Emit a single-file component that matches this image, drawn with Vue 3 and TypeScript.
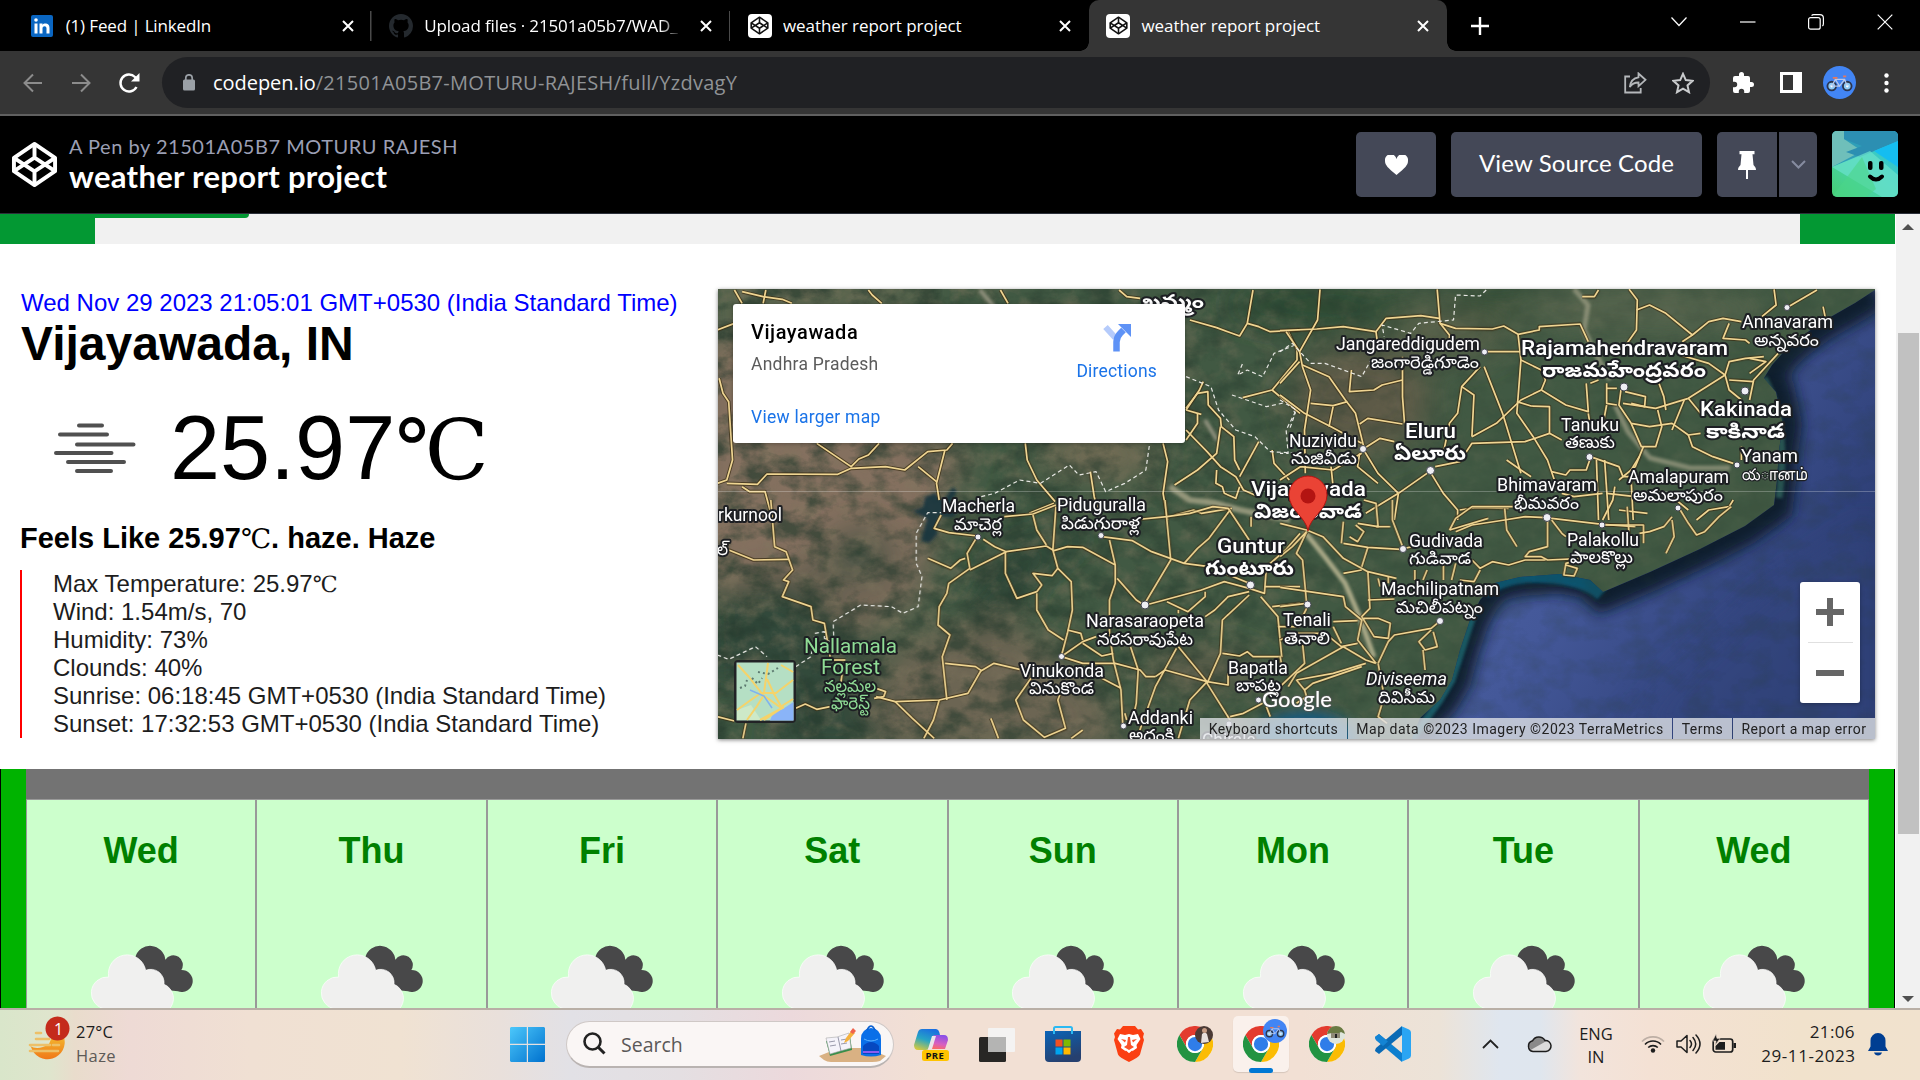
<script setup lang="ts">
interface Tab { title: string; icon: 'linkedin' | 'github' | 'codepen'; active?: boolean }
interface Label { t: string; x: number; w: number; y: number; s: number; k?: string }

const tabs: Tab[] = [
  { title: '(1) Feed | LinkedIn', icon: 'linkedin' },
  { title: 'Upload files · 21501a05b7/WAD_', icon: 'github' },
  { title: 'weather report project', icon: 'codepen' },
  { title: 'weather report project', icon: 'codepen', active: true },
]

const details: string[] = [
  'Wind: 1.54m/s, 70',
  'Humidity: 73%',
  'Clounds: 40%',
  'Sunrise: 06:18:45 GMT+0530 (India Standard Time)',
  'Sunset: 17:32:53 GMT+0530 (India Standard Time)',
]

const days: string[] = ['Wed', 'Thu', 'Fri', 'Sat', 'Sun', 'Mon', 'Tue', 'Wed']

const labels: Label[] = [
  { t: 'ఖమ్మం', x: 1142, w: 62, y: 308, s: 19, k: 'big te' },
  { t: 'Jangareddigudem', x: 1336, w: 144, y: 350, s: 17.5 },
  { t: 'జంగారెడ్డిగూడెం', x: 1371, w: 108, y: 368, s: 17 },
  { t: 'Rajamahendravaram', x: 1521, w: 207, y: 355, s: 21, k: 'big' },
  { t: 'రాజమహేంద్రవరం', x: 1542, w: 164, y: 377, s: 20, k: 'big te' },
  { t: 'Annavaram', x: 1742, w: 91, y: 328, s: 17.5 },
  { t: 'అన్నవరం', x: 1754, w: 65, y: 346, s: 17 },
  { t: 'Kakinada', x: 1700, w: 92, y: 416, s: 21, k: 'big' },
  { t: 'కాకినాడ', x: 1706, w: 79, y: 438, s: 20, k: 'big te' },
  { t: 'Tanuku', x: 1561, w: 58, y: 431, s: 17.5 },
  { t: 'తణుకు', x: 1565, w: 50, y: 448, s: 17 },
  { t: 'Nuzividu', x: 1289, w: 68, y: 447, s: 17.5 },
  { t: 'నుజివీడు', x: 1291, w: 66, y: 464, s: 17 },
  { t: 'Eluru', x: 1405, w: 51, y: 438, s: 21, k: 'big' },
  { t: 'ఏలూరు', x: 1394, w: 72, y: 460, s: 20, k: 'big te' },
  { t: 'యானம்', x: 1742, w: 66, y: 480, s: 16, k: 'ta' },
  { t: 'Yanam', x: 1741, w: 57, y: 462, s: 17.5 },
  { t: 'Bhimavaram', x: 1497, w: 100, y: 491, s: 17.5 },
  { t: 'భీమవరం', x: 1514, w: 65, y: 509, s: 17 },
  { t: 'Amalapuram', x: 1628, w: 101, y: 483, s: 17.5 },
  { t: 'అమలాపురం', x: 1633, w: 90, y: 501, s: 17 },
  { t: 'Vijayawada', x: 1251, w: 115, y: 496, s: 21, k: 'big' },
  { t: 'విజయవాడ', x: 1254, w: 108, y: 518, s: 20, k: 'big te' },
  { t: 'Macherla', x: 942, w: 73, y: 512, s: 17.5 },
  { t: 'మాచెర్ల', x: 954, w: 48, y: 530, s: 17 },
  { t: 'Piduguralla', x: 1057, w: 89, y: 511, s: 17.5 },
  { t: 'పిడుగురాళ్ల', x: 1061, w: 79, y: 529, s: 17 },
  { t: 'rkurnool', x: 718, w: 64, y: 521, s: 17.5 },
  { t: 'ల్', x: 717, w: 11, y: 555, s: 17 },
  { t: 'Guntur', x: 1217, w: 68, y: 553, s: 21, k: 'big' },
  { t: 'గుంటూరు', x: 1205, w: 89, y: 575, s: 20, k: 'big te' },
  { t: 'Narasaraopeta', x: 1086, w: 118, y: 627, s: 17.5 },
  { t: 'నరసరావుపేట', x: 1097, w: 96, y: 645, s: 17 },
  { t: 'Nallamala', x: 804, w: 93, y: 653, s: 20, k: 'park' },
  { t: 'Forest', x: 821, w: 59, y: 674, s: 20, k: 'park' },
  { t: 'నల్లమల', x: 824, w: 52, y: 692, s: 17, k: 'park' },
  { t: 'ఫారెస్ట్', x: 831, w: 39, y: 709, s: 17, k: 'park' },
  { t: 'Vinukonda', x: 1020, w: 84, y: 677, s: 17.5 },
  { t: 'వినుకొండ', x: 1029, w: 65, y: 694, s: 17 },
  { t: 'Bapatla', x: 1228, w: 60, y: 674, s: 17.5 },
  { t: 'బాపట్ల', x: 1236, w: 45, y: 691, s: 17 },
  { t: 'Addanki', x: 1128, w: 65, y: 724, s: 17.5 },
  { t: 'అద్దంకి', x: 1129, w: 45, y: 741, s: 17 },
  { t: 'Chirala', x: 1202, w: 54, y: 746, s: 17.5 },
  { t: 'Tenali', x: 1283, w: 48, y: 626, s: 17.5 },
  { t: 'తెనాలి', x: 1284, w: 46, y: 644, s: 17 },
  { t: 'Gudivada', x: 1409, w: 74, y: 547, s: 17.5 },
  { t: 'గుడివాడ', x: 1409, w: 62, y: 564, s: 17 },
  { t: 'Machilipatnam', x: 1381, w: 118, y: 595, s: 17.5 },
  { t: 'మచిలీపట్నం', x: 1396, w: 87, y: 613, s: 17 },
  { t: 'Palakollu', x: 1567, w: 72, y: 546, s: 17.5 },
  { t: 'పాలకొల్లు', x: 1570, w: 63, y: 563, s: 17 },
  { t: 'Diviseema', x: 1366, w: 81, y: 685, s: 17.5, k: 'ital' },
  { t: 'దివిసీమ', x: 1378, w: 57, y: 703, s: 17 },
]

const towns: [number, number, number][] = [
  [1484.5, 352, 3], [1624, 387, 4], [1787, 307.5, 3], [1745, 391, 4], [1589.5, 457, 3.5], [1363, 449, 3.5],
  [1430.5, 470.5, 4], [1737, 465, 3], [1547, 517.5, 4], [1602, 525, 3], [1678, 508, 3], [978, 537, 3],
  [1101, 535.5, 3], [1250.5, 585, 4], [1145, 605, 4], [1061.5, 656.5, 3], [1258.5, 700, 3], [1123.5, 726, 3],
  [1307.5, 604.5, 3.5], [1403, 549, 3.5], [1440, 621, 3.5], [1229, 724, 3],
]

// Each tile keeps its roads in its own local grid.
const tiles = [
  {
    m: 'translate(700 280) scale(.3827 .33333)',
    roads: ['90,30 110,70', '110,35 165,50 215,58 240,70', '172,30 165,70', '45,150 90,130', '440,30 450,45 475,70', '785,30 805,70', '1095,30 1115,50 1150,55', '1445,30 1430,130 1410,168 1350,143 1280,120', '1430,130 1460,140 1490,155 1568,150', '50,295 60,340 75,365 85,540 70,600 45,610', '70,610 150,613 175,582 360,583 395,565 485,560 535,570 595,515 645,510 660,490', '305,490 395,560 415,537 440,525 468,490', '640,510 618,610 625,660', '570,560 618,605', '850,490 855,540 880,600 928,665', '1020,575 1030,650 1040,690', '1210,490 1222,545 1210,640 1222,720', '1270,390 1305,330 1315,305', '1270,385 1300,340 1327,335 1328,375 1360,415 1362,440 1395,470 1397,540 1410,570', '1270,450 1325,515 1360,560 1400,590 1420,630 1460,650', '1360,440 1350,520 1300,570 1240,615', '1460,485 1410,590', '1418,353 1495,330 1560,240 1560,210 1535,150', '1495,330 1568,400', '1495,510 1500,550 1540,600', '1350,570 1348,610 1365,620 1370,640 1400,655 1410,620', '1240,705 1290,690 1310,700 1390,685', '110,620 130,635 170,635 190,720', '1300,400 1300,430 1270,480', '1270,390 1310,403', '860,700 925,670'],
    borders: ['735,650 770,640 835,600 890,610 965,555 990,585 1035,575 1060,635 1110,610 1165,570 1175,490', '1270,290 1335,320 1355,390 1400,450 1450,470 1490,515 1568,520', '1555,195 1500,220 1470,290 1430,270 1405,285 1420,245', '1390,345 1480,380 1540,365 1555,400 1540,450'],
  },
  {
    m: 'translate(1280 280) scale(.40833 .33333)',
    roads: ['98,28 92,120 48,215 55,260 75,330 60,450 62,580', '0,152 90,147 155,140 235,155 260,115 345,107 390,115', '385,28 392,130 430,145 520,147 548,138 583,163 635,150 635,140 735,132 755,185', '583,163 590,240 580,400 620,470 655,540 672,600', '235,155 240,200', '392,130 415,165 415,190', '15,155 48,215', '48,245 0,310', '55,255 120,290 160,360 185,400 205,500', '75,370 130,377 165,365', '175,270 170,335 230,330 250,315 300,300', '300,230 300,350 305,430', '195,432 215,415 300,432', '200,510 245,475 280,485', '0,345 60,400 125,440 200,490', '500,215 590,215', '490,260 445,320 435,400 415,430 400,520', '500,260 545,400 590,580', '445,320 475,345 470,470', '380,560 440,545 470,490 600,485 660,460 690,480', '470,470 530,430 590,360 640,330', '590,240 640,270 650,300 640,330', '580,365 615,378 660,380 660,460', '640,330 700,375 755,395 750,310', '760,310 780,300', '780,30 770,50 740,50', '855,28 875,60 873,150 850,190', '873,90 905,75 945,100 1010,165 1050,125 1085,115 1130,125', '1010,165 985,185', '1210,28 1215,75 1180,110', '1315,30 1245,80', '1330,80 1335,110', '1100,130 1085,175 1140,180 1150,190', '980,225 1050,250 1090,285 1100,330 1130,360', '1090,285 1000,355 920,385 840,370', '1185,230 1140,235 1100,245 1090,285', '1220,220 1160,300 1150,360', '1100,300 1160,305', '1150,280 1190,245 1150,235', '1000,355 1030,400', '925,300 940,350 945,390', '845,335 895,350 893,380 860,370', '835,330 830,375 860,430 905,440 960,430 1000,465 1030,460', '860,430 885,500 920,500 935,440 925,390', '990,360 960,450', '1000,465 1010,500 1060,530 1110,550', '1130,500 1130,540', '755,400 760,440', '760,535 750,570 710,570 700,585 665,575', '760,530 830,560 840,590 860,590', '800,310 800,370 825,375', '800,325 825,325', '800,375 790,440', '775,540 780,720', '795,540 805,720', '820,620 815,660 790,720', '690,640 720,650 790,640', '290,640 325,610 360,580', '370,580 400,640 435,690 435,720', '290,640 280,720', '205,510 240,580 290,640', '195,520 190,560 240,610', '0,600 50,560 130,570 200,520', '125,560 130,620', '290,640 210,700', '440,690 480,683 560,685', '555,540 590,570 615,590', '860,600 865,720', '830,690 900,700', '800,640 870,650', '1110,660 1100,680 1050,690 1020,720', '890,500 870,560 830,600', '880,530 860,570', '960,650 1000,690', '130,380 120,440'],
    borders: ['0,215 30,190 75,250 110,250 200,290 225,235', '505,30 490,48 430,45 425,120 340,130 320,160 250,135 255,170', '0,360 40,390 15,450 20,520 0,520'],
  },
  {
    m: 'translate(700 500) scale(.3827 .33333)',
    roads: ['185,0 195,140 225,155 242,210 218,240 232,245 215,290 290,320 295,360 325,370 340,470', '75,150 140,180 230,178', '630,45 612,85 650,98 725,108', '720,118 698,160 705,205 650,250 645,280 625,320 622,375 653,405 633,470 645,600', '595,175 655,205 680,180 693,175', '705,210 740,190 800,155 770,140 740,118', '800,155 905,138 925,152 960,140 1000,142 1085,195 1085,250 1070,300 1070,400 1080,480 1100,570 1105,680', '798,155 798,220 828,295 880,275 893,255 870,220 920,227 935,205', '870,45 880,90 905,135', '795,50 870,42 930,15', '930,20 922,150 935,205 970,245 973,330 960,400 945,465', '880,280 880,330 910,390 950,420', '960,390 995,400 1000,420', '950,465 1000,425 1035,410', '1000,430 1050,468 1080,460', '945,470 1000,490 1085,490 1150,510 1165,530 1190,530', '1090,235 1140,300 1160,315 1230,180 1215,0', '1050,110 1130,122 1180,155 1265,190 1330,200 1435,250', '1130,60 1220,50 1280,40 1340,20 1380,25 1435,120', '1385,30 1330,115 1300,145 1265,190', '1165,315 1310,270 1370,245 1435,265 1475,280 1480,200 1530,150 1568,100', '1220,305 1275,335 1320,290 1320,275', '1320,350 1345,330 1380,290 1435,275', '1435,285 1365,360 1360,460 1325,550 1385,660', '1465,290 1510,350 1520,470 1445,470 1430,455 1410,468 1365,460', '1250,440 1325,545 1280,600 1250,715', '1245,445 1190,560 1140,720', '1190,530 1215,510 1325,545 1380,555 1380,520', '1125,440 1145,510 1140,610 1130,660', '1050,535 1100,565', '865,535 825,600 845,660 900,712 955,685 935,600 940,585', '640,490 720,500 735,512 768,490 835,508', '735,510 700,580 625,600 510,605 460,590', '510,605 555,655 612,715', '625,600 610,660 585,715', '455,595 480,590 485,575 460,565', '250,625 275,612 305,628 340,620', '45,650 90,663', '120,670 112,715', '760,655 780,715', '1480,620 1490,650', '1510,380 1568,380', '1475,260 1568,260', '1495,320 1568,310', '1385,650 1420,640 1470,610', '1440,80 1440,50', '1070,120 1085,195', '372,515 368,550', '330,480 380,480', '970,715 1000,690', '1110,640 1115,660', '1250,330 1250,340'],
    borders: ['45,465 75,478 145,440 175,470', '250,500 290,470 300,400 325,395 325,415 350,430 348,365 420,315 500,320 530,340 570,320 580,230 565,190 565,100 595,38 630,38'],
  },
  {
    m: 'translate(1280 500) scale(.40833 .33333)',
    roads: ['0,70 65,90 105,110 155,175 215,215 285,235', '65,95 40,160 55,180 65,310', '65,95 30,140 0,170', '150,130 155,65', '185,75 205,95 190,125 170,110', '155,130 215,142 295,148 340,135', '215,142 200,200', '205,0 235,10 240,80 190,70', '235,80 270,80', '275,0 275,60 300,140', '415,90 430,55 470,20 520,20 600,20', '430,95 470,75 550,60 600,50 650,53 790,73 870,80', '415,90 510,55', '550,25 555,90 580,140', '665,60 690,100 700,110', '655,55 655,140 610,155 600,170 640,170 655,180 745,175 700,190 695,225 720,228 728,205 700,195', '960,60 965,110 945,160', '980,30 1000,70 1020,105 1040,95 1075,50 1105,20', '790,75 890,75 890,130', '850,20 855,110', '880,100 905,95 940,80 960,50', '330,210 330,240', '360,210 350,240', '400,190 400,240', '430,190 420,240', '490,210 475,245 440,240', '470,180 490,205 520,185 560,195 600,180 650,180', '0,262 155,290 160,320 200,360 190,420 235,490', '0,320 65,310', '215,215 220,325 200,350 230,410 265,415 270,370 240,355 205,355', '240,235 245,260', '265,230 265,250', '0,420 40,400 110,400 150,440 190,430', '130,365 190,362', '65,325 55,350', '55,430 60,490 0,560', '390,365 370,385 280,405 265,425 240,490', '370,390 340,425 355,450 385,440 375,395', '350,450 355,510', '240,490 255,590 240,650 262,670', '20,560 40,520 155,440 210,480 235,490', '40,540 60,570 80,550 200,500', '40,540 130,520 210,490', '215,300 280,297', '60,570 65,590 40,610', '155,220 200,210', '0,470 5,500', '150,430 130,380'],
    borders: [],
  },
]

const coast = 'M1875 290 1855 303 1820 323 1790 345 1772 365 1764 378 1776 392 1783 425 1779 450 1777 480 1774 505 1745 526 1700 549 1650 572 1603 592 1590 580 1560 574 1520 577 1495 583 1480 600 1470 620 1460 650 1452 680 1440 700 1420 718 1412 739'

const roadD = (p: string): string => 'M' + p.replace(/ /g, 'L')

const chromes = ['portrait', 'bike', 'house'] as const
</script>

<template>
  <div class="screen">
    <svg class="defs" width="0" height="0">
      <defs>
        <symbol id="pen" viewBox="0 0 24 24">
          <g fill="none" stroke="currentColor" stroke-width="2" stroke-linejoin="round">
            <path d="M12 1.5 22.5 8.6v6.8L12 22.5 1.5 15.4V8.6z" />
            <path d="M12 1.5v7M12 15.5v7M1.5 8.6 12 15.5 22.5 8.6M1.5 15.4 12 8.5l10.500 6.900" />
          </g>
        </symbol>
        <symbol id="cloud" viewBox="0 0 312 190">
          <path fill="#484849" d="M136 36a46 46 0 0 1 90 8 28 28 0 0 1 48 31 33 33 0 1 1-10 64L180 130z" />
          <path fill="#f0f0ef" stroke="#fff" stroke-width="2" d="M48 192a48 48 0 0 1 8-96 55 55 0 0 1 111-20 40 40 0 0 1 55 42 46 46 0 0 1 14 76z" />
        </symbol>
        <symbol id="chrome" viewBox="0 0 48 48">
          <circle cx="24" cy="24" r="24" fill="#fff" />
          <path fill="#e33b2e" d="M3.200 12A24 24 0 0 1 44.800 12H24a12 12 0 0 0-10.400 18z" />
          <path fill="#fbbc04" d="M44.800 12A24 24 0 0 1 24 48l10.400-18A12 12 0 0 0 24 12z" />
          <path fill="#229342" d="M3.200 12A24 24 0 0 0 24 48l10.400-18a12 12 0 0 1-20.800 0z" />
          <circle cx="24" cy="24" r="12" fill="#fff" />
          <circle cx="24" cy="24" r="9.500" fill="#2f7de9" />
        </symbol>
        <symbol id="bike" viewBox="0 0 32 32">
          <circle cx="16" cy="16" r="16" fill="#4285f4" />
          <g fill="#8ec9f5" stroke="#2b3550" stroke-width="1.800"><circle cx="8.500" cy="19.500" r="4.200" /><circle cx="23.500" cy="19.500" r="4.200" /></g>
          <g fill="#fff"><circle cx="8.500" cy="19.500" r="1.300" /><circle cx="23.500" cy="19.500" r="1.300" /></g>
          <path d="M8.500 19.500 12 13h9l2.500 6.500M12 13l4 6.500 5-6.500M16 19.500h-7" fill="none" stroke="#b9c8ea" stroke-width="1.200" />
          <path d="M9.500 11.500h4.500M19.500 10h3" stroke="#e8795b" stroke-width="1.800" />
        </symbol>
      </defs>
    </svg>

    <header class="tabstrip">
      <div v-for="(tab, i) in tabs" :key="i" class="tab" :class="{ active: tab.active, ruled: i < 2 }">
        <span class="fav">
          <svg v-if="tab.icon === 'linkedin'" width="22" height="22" viewBox="0 0 22 22">
            <rect width="22" height="22" rx="2" fill="#0a66c2" />
            <path fill="#fff" d="M3.500 8.500h3v10h-3zM8.500 8.500h3v1.400c1-1.800 7-2.400 7 3v5.600h-3v-5.200c0-3-4-2.600-4 0v5.200h-3z" /><circle cx="5" cy="5" r="1.800" fill="#fff" />
          </svg>
          <svg v-else-if="tab.icon === 'github'" width="24" height="24" viewBox="0 0 16 16">
            <path fill="#24292e" d="M8 0C3.580 0 0 3.580 0 8c0 3.540 2.290 6.530 5.470 7.590.4.070.55-.17.55-.38 0-.19-.01-.82-.01-1.490-2.010.37-2.530-.49-2.690-.94-.09-.23-.48-.94-.82-1.130-.28-.15-.68-.52-.01-.53.63-.01 1.080.58 1.230.82.72 1.210 1.870.87 2.330.66.07-.52.28-.87.51-1.070-1.780-.2-3.640-.89-3.640-3.950 0-.87.31-1.590.82-2.150-.08-.2-.36-1.020.08-2.120 0 0 .67-.21 2.200.82a7.600 7.600 0 0 1 4 0c1.530-1.040 2.200-.82 2.200-.82.44 1.100.16 1.920.08 2.120.51.56.82 1.270.82 2.150 0 3.070-1.870 3.750-3.650 3.950.29.25.54.73.54 1.480 0 1.070-.01 1.930-.01 2.200 0 .21.15.46.55.38A8 8 0 0 0 16 8c0-4.420-3.580-8-8-8z" />
          </svg>
          <span v-else class="penfav"><svg width="19" height="19"><use href="#pen" /></svg></span>
        </span>
        <span class="tabtitle" :class="tab.icon">{{ tab.title }}</span>
        <svg class="x" width="12" height="12" viewBox="0 0 12 12"><path d="M1 1l10 10M11 1L1 11" stroke="#fff" stroke-width="2" /></svg>
      </div>
      <svg class="plus" width="20" height="20" viewBox="0 0 20 20"><path d="M10 1v18M1 10h18" stroke="#fff" stroke-width="2.400" /></svg>
      <div class="winctl">
        <svg width="16" height="16" viewBox="0 0 16 16"><path d="M.5 3.500 8 11.500l7.500-8" /></svg>
        <svg width="16" height="16" viewBox="0 0 16 16"><path d="M0 8h15.500" /></svg>
        <svg width="16" height="16" viewBox="0 0 16 16"><rect x=".6" y="3.600" width="11.600" height="11.600" rx="2" /><path d="M3.600 1.600c.5-.7 1-.9 2-.9h6.200q3.600 0 3.600 3.600v5.500c0 1.300-.3 1.800-1 2.300" /></svg>
        <svg width="16" height="16" viewBox="0 0 16 16"><path d="M.7.7l14.600 14.600M15.300.7.7 15.300" /></svg>
      </div>
    </header>

    <div class="toolbar">
      <svg class="nav" width="20" height="20" viewBox="0 0 20 20"><path d="M19 10H2M10 1.500 1.500 10l8.500 8.500" /></svg>
      <svg class="nav" width="20" height="20" viewBox="0 0 20 20"><path d="M1 10h17M10 1.500l8.500 8.500-8.500 8.500" /></svg>
      <svg class="nav reload" width="22" height="22" viewBox="0 0 22 22"><path d="M18.500 15A8.500 8.500 0 1 1 17 5l2 2.500" /><path d="M21.500 1v8.500H13z" fill="#fff" stroke="none" /></svg>
      <div class="omnibox">
        <svg width="12" height="17" viewBox="0 0 12 17"><rect y="5.500" width="12" height="11" rx="1.500" fill="#9aa0a6" /><path d="M2.800 7V4a3.200 3.200 0 0 1 6.400 0v3" fill="none" stroke="#9aa0a6" stroke-width="1.700" /></svg>
        <span class="url"><b>codepen.io</b>/21501A05B7-MOTURU-RAJESH/full/YzdvagY</span>
        <svg class="share" width="23" height="22" viewBox="0 0 23 22"><path d="M6 4.500H1.200v16h15.500V16" /><path d="M14.500 1.500 21.500 7.800l-7 6.400v-3.700c-4 0-6.500 1-8.700 4.500.6-5.500 3.400-9 8.700-9.700z" /></svg>
        <svg class="star" width="22" height="22" viewBox="0 0 22 22"><path d="M11 1.800l2.800 6.300 6.800.7-5.100 4.600 1.500 6.800-6-3.500-6 3.500 1.500-6.800L1.400 8.800l6.800-.7z" /></svg>
      </div>
      <svg width="24" height="24" viewBox="0 0 24 24"><path fill="#fff" d="M20.500 11H19V7a2 2 0 0 0-2-2h-4V3.500a2.500 2.500 0 0 0-5 0V5H4a2 2 0 0 0-2 2v3.800h1.500a2.700 2.700 0 0 1 0 5.400H2V20a2 2 0 0 0 2 2h3.800v-1.500a2.700 2.700 0 0 1 5.400 0V22H17a2 2 0 0 0 2-2v-4h1.500a2.500 2.500 0 0 0 0-5z" /></svg>
      <span class="panel" />
      <svg class="profile" width="33" height="33"><use href="#bike" /></svg>
      <svg class="dots" width="5" height="20" viewBox="0 0 5 20"><g fill="#fff"><circle cx="2.500" cy="2.500" r="2.200" /><circle cx="2.500" cy="10" r="2.200" /><circle cx="2.500" cy="17.500" r="2.200" /></g></svg>
    </div>

    <div class="penhead">
      <svg class="penlogo" width="47" height="47"><use href="#pen" /></svg>
      <div class="pentitle">
        <p>A Pen by 21501A05B7 MOTURU RAJESH</p>
        <h1>weather report project</h1>
      </div>
      <button class="btn heart"><svg width="23" height="20" viewBox="0 0 23 20"><path fill="#fff" d="M11.500 20C3 13 0 10 0 6a5.800 5.800 0 0 1 11.500-2A5.800 5.800 0 0 1 23 6c0 4-3 7-11.500 14z" /></svg></button>
      <button class="btn source">View Source Code</button>
      <button class="btn pin"><svg width="18" height="28" viewBox="0 0 18 28"><path fill="#fff" d="M1.500 0h15v3.300h-2L15.500 14c1.500 1.500 2.500 3 2.500 5H0c0-2 1-3.500 2.500-5L3.500 3.300h-2zM8 19h2v9H8z" /></svg></button>
      <button class="btn caret"><svg width="15" height="9" viewBox="0 0 15 9"><path d="M1 1l6.500 6.500L14 1" fill="none" stroke="#868ca0" stroke-width="2" /></svg></button>
      <svg class="avatar" width="66" height="66" viewBox="0 0 66 66">
        <defs><linearGradient id="av" x1="0" y1="1" x2="1" y2="0"><stop offset="0" stop-color="#46cf74" /><stop offset=".5" stop-color="#48d4b4" /><stop offset="1" stop-color="#1db4e8" /></linearGradient></defs>
        <rect width="66" height="66" fill="url(#av)" />
        <path d="M0 0h66v10L0 36z" fill="#2f9fb8" /><path d="M0 0h12v8L30 20 0 36z" fill="#6fbfba" /><path d="M12 0h54v10L28 26l-14-5 16-6L12 8z" fill="#2c8fb2" />
        <path d="M66 10v26L42 20z" fill="#15bdf0" /><path d="M38 20 66 44v22H50L0 36z" fill="#68e0cb" opacity=".75" />
        <path d="M0 66 30 26l14 32-10 8z" fill="#4bd588" opacity=".6" />
        <rect x="36" y="30" width="4.500" height="9" rx="2" /><rect x="47" y="30" width="4.500" height="9" rx="2" />
        <path d="M38 45.500q6 6 12 0" fill="none" stroke="#000" stroke-width="4" stroke-linecap="round" />
      </svg>
    </div>

    <main class="viewport">
      <div class="page">
        <div class="band"><i class="g" /><div class="mid"><i class="strip" /></div><i class="g" /></div>
        <section class="now">
          <div class="report">
            <p class="date">Wed Nov 29 2023 21:05:01 GMT+0530 (India Standard Time)</p>
            <h2>Vijayawada, IN</h2>
            <div class="temp">
              <svg width="82" height="50" viewBox="55 422.500 82 50"><path d="M80 425h23M61 434h47M78 444h56.500M57 452.500h55.500M69 461.500h56M78 470.500h34" stroke="#505050" stroke-width="4" stroke-linecap="round" /></svg>
              <span>25.97<em>℃</em></span>
            </div>
            <h3>Feels Like 25.97<em>℃</em>. haze. Haze</h3>
            <div class="details">
              <p>Max Temperature: 25.97<em>℃</em></p>
              <p v-for="d in details" :key="d">{{ d }}</p>
            </div>
          </div>

          <div class="map">
            <svg class="terrain" width="1157" height="450" viewBox="718 289 1157 450">
              <defs>
                <filter id="grain" x="0" y="0" width="100%" height="100%" color-interpolation-filters="sRGB">
                  <feTurbulence type="fractalNoise" baseFrequency=".05 .06" numOctaves="5" seed="8" />
                  <feColorMatrix values="0 0 0 0 .5  0 0 0 0 .46  0 0 0 0 .37  2.400 0 0 0 -1" />
                </filter>
                <filter id="shade" x="0" y="0" width="100%" height="100%" color-interpolation-filters="sRGB">
                  <feTurbulence type="fractalNoise" baseFrequency=".035 .05" numOctaves="5" seed="21" />
                  <feColorMatrix values="0 0 0 0 .15  0 0 0 0 .23  0 0 0 0 .18  0 2.800 0 0 -1.150" />
                </filter>
                <filter id="soft" filterUnits="userSpaceOnUse" x="618" y="189" width="1357" height="650"><feGaussianBlur stdDeviation="16" /></filter>
                <filter id="soft2" filterUnits="userSpaceOnUse" x="618" y="189" width="1357" height="650"><feGaussianBlur stdDeviation="7" /></filter>
                <filter id="soft3" filterUnits="userSpaceOnUse" x="618" y="189" width="1357" height="650"><feGaussianBlur stdDeviation="1.500" /></filter>
                <linearGradient id="sea" x1="0" y1="0" x2="1" y2=".6"><stop offset=".2" stop-color="#4e63a3" /><stop offset=".55" stop-color="#445899" /><stop offset="1" stop-color="#2b3c72" /></linearGradient>
                <linearGradient id="west" x1="0" x2="1" y1="0" y2="0"><stop offset="0" stop-color="#fff" /><stop offset=".42" stop-color="#bbb" /><stop offset=".62" stop-color="#444" /><stop offset="1" stop-color="#333" /></linearGradient>
                <mask id="dry"><rect x="718" y="289" width="1157" height="450" fill="url(#west)" /></mask>
                <clipPath id="coast"><path :d="coast + 'H1875z'" /></clipPath>
              </defs>
              <rect x="718" y="289" width="1157" height="450" fill="#415943" />
              <g filter="url(#soft)">
                <path d="M700 340h130l70 90 70 20-30 60-20 90-60 30-60 0-30-50-90 10z" fill="#84705f" />
                <path d="M718 270h200l20 30-220 40z" fill="#5d6650" />
                <path d="M800 560l60-40 40 20-10 50-60 0z" fill="#52584a" />
                <path d="M900 640l110-20 80 60 40 70H860l10-60z" fill="#6c6553" />
                <ellipse cx="1100" cy="455" rx="60" ry="20" fill="#7a7058" />
                <ellipse cx="1360" cy="400" rx="70" ry="55" fill="#5d5a47" />
                <ellipse cx="1450" cy="330" rx="60" ry="30" fill="#56604a" />
                <path d="M700 610l80-40 90 60-10 50 30 70H770l20-60-90-10z" fill="#33493a" />
                <path d="M960 640l30-70 40-30 60-10-40 30-50 60z" fill="#2c4234" />
                <ellipse cx="1320" cy="305" rx="90" ry="20" fill="#2b4831" />
                <ellipse cx="1500" cy="300" rx="50" ry="14" fill="#2b4831" />
                <ellipse cx="1640" cy="310" rx="130" ry="18" fill="#5a6650" />
                <ellipse cx="1200" cy="670" rx="60" ry="20" fill="#5c5b48" />
              </g>
              <g mask="url(#dry)">
                <rect x="718" y="289" width="1157" height="450" filter="url(#grain)" opacity=".55" />
                <rect x="718" y="289" width="1157" height="450" filter="url(#shade)" opacity=".7" />
              </g>
              <g filter="url(#soft3)" fill="#16343f"><path d="M925 497l10-4 8 8 10-14 4 4-8 16 10 4-6 6-14 0-2 18-8 8-8-2 6-22-14-8 10-4z" opacity=".9" /></g>
              <ellipse cx="1305" cy="740" rx="52" ry="28" fill="#155a86" filter="url(#soft2)" />
              <g clip-path="url(#coast)">
                <rect x="1400" y="289" width="475" height="450" fill="url(#sea)" />
                <path :d="coast" fill="none" stroke="#101a2c" stroke-width="38" filter="url(#soft2)" opacity=".95" />
                <path d="M1484 592q20-18 60-16 40 2 58 18" fill="none" stroke="#08627f" stroke-width="14" filter="url(#soft3)" opacity=".8" />
                <path d="M1764 378q25 45 15 120" fill="none" stroke="#2f625c" stroke-width="7" filter="url(#soft3)" opacity=".8" />
                <path d="M1475 610 1452 680 1440 700 1412 739" fill="none" stroke="#1f6a74" stroke-width="7" filter="url(#soft3)" opacity=".8" />
                <path d="M1620 739l60-70 90-80 105-70v220z" fill="#34477f" opacity=".55" filter="url(#soft)" />
                <rect x="1400" y="289" width="475" height="450" filter="url(#shade)" opacity=".16" />
              </g>
              <g fill="none" filter="url(#soft3)">
                <path d="M1574 289 1588 305 1584 330 1595 352 1610 380M1615 405 1628 432 1650 458 1690 468 1730 468" stroke="#9a9b82" stroke-width="5" opacity=".75" />
                <path d="M1304 531 1325 557 1345 583 1358 613 1374 657" stroke="#b5b18f" stroke-width="5" opacity=".9" />
                <path d="M1170 487 1190 500 1215 503 1240 510 1290 520" stroke="#a8a588" stroke-width="6" opacity=".8" />
                <path d="M980 290l15 18M1205 420l12 20" stroke="#8d8f7b" stroke-width="4" />
              </g>
              <g v-for="(tile, i) in tiles" :key="i" :transform="tile.m" fill="none" stroke-linejoin="round">
                <path v-for="(r, n) in tile.roads" :key="'c' + n" class="casing" :d="roadD(r)" />
                <path v-for="(r, n) in tile.roads" :key="'r' + n" class="road" :d="roadD(r)" />
                <path v-for="(r, n) in tile.borders" :key="'b' + n" class="border" :d="roadD(r)" />
              </g>
              <path d="M718 491.500h1157" stroke="#fff" opacity=".25" />
              <circle v-for="(c, i) in towns" :key="'t' + i" :cx="c[0]" :cy="c[1]" :r="c[2]" fill="#eeeef4" stroke="#444650" />
              <text v-for="(l, i) in labels" :key="'l' + i" :class="l.k" :x="l.x" :y="l.y" :font-size="l.s" :textLength="l.w" lengthAdjust="spacingAndGlyphs">{{ l.t }}</text>
              <text class="glogo" x="1262" y="707" font-size="22" textLength="70">Google</text>
              <path d="M1308 531c-2-14-19-21-19-36a19 19 0 0 1 38 0c0 15-17 22-19 36z" fill="#ea4335" stroke="#b31412" stroke-width="1" /><circle cx="1308" cy="496" r="7.500" fill="#b31412" />
            </svg>

            <div class="card">
              <div class="place"><b>Vijayawada</b><span>Andhra Pradesh</span><a>View larger map</a></div>
              <div class="dir">
                <svg width="28" height="28" viewBox="0 0 28 28"><path d="M2.500 3 12 13.500" stroke="#b5cbfb" stroke-width="6" /><path d="M13.500 27.500V18c0-4 1-6 4-9l3-3" fill="none" stroke="#5e92f6" stroke-width="6.500" /><path d="M15 0h13v13z" fill="#5e92f6" /></svg>
                <a>Directions</a>
              </div>
            </div>
            <svg class="thumb" width="62" height="63" viewBox="0 0 62 63">
              <rect width="62" height="63" rx="4" fill="#222326" /><rect x="2.500" y="2.500" width="57" height="58" fill="#b5dfc4" />
              <path d="M59.500 42v18.500H36q2-9 12-11z" fill="#8ab4f8" /><path d="M3 60V50l14-5 10 15z" fill="#cde9c8" />
              <g fill="none" stroke="#f5d36a" stroke-width="2"><path d="M4 5l11 12 14 18 17 12 13-8M34 3l-4 30M59 20 42 33H27L14 42 3 50M13 60l10-14 7-11M30 60l18-12-8-14-7-15M47 5l12 7M26 60l24-13" /></g>
              <path d="M16 30l14 6 8 12" fill="none" stroke="#7fb2ef" stroke-width="1.500" />
              <path d="M6 28l5-2 2-6M18 18l6 6 4-6M24 12l10 2 10-6" fill="none" stroke="#5d7a70" stroke-width="2" stroke-dasharray="2 3" />
            </svg>
            <div class="zoom">
              <svg width="28" height="28" viewBox="0 0 28 28"><path d="M14 0v28M0 14h28" stroke="#666" stroke-width="6" /></svg>
              <i />
              <svg width="28" height="28" viewBox="0 0 28 28"><path d="M0 14h28" stroke="#666" stroke-width="6" /></svg>
            </div>
            <div class="credits"><span class="c1">Keyboard shortcuts</span><span class="c2">Map data ©2023 Imagery ©2023 TerraMetrics</span><span class="c3">Terms</span><span class="c4">Report a map error</span></div>
          </div>
        </section>

        <section class="forecast">
          <div class="week">
            <div v-for="(d, i) in days" :key="i" class="day"><h4>{{ d }}</h4><svg width="104" height="63.300"><use href="#cloud" width="104" height="63.300" /></svg></div>
          </div>
        </section>
      </div>
      <aside class="scroll"><i class="up" /><i class="bar" /><i class="down" /></aside>
    </main>

    <footer class="taskbar">
      <div class="weather">
        <svg width="42" height="46" viewBox="0 0 42 46">
          <defs><linearGradient id="sun" x1="0" y1="0" x2="0" y2="1"><stop offset="0" stop-color="#f3b52e" /><stop offset="1" stop-color="#f07818" /></linearGradient></defs>
          <path d="M2 30q8 5 19-2l3-7h12a17 17 0 0 1-33 10z" fill="url(#sun)" />
          <path d="M8 17h5M8 23h13M2 29h20M25 29h6M2 35h28" stroke="#edc068" stroke-width="2.600" stroke-linecap="round" />
          <circle cx="29.500" cy="12.500" r="12" fill="#c42b1c" />
        </svg>
        <span class="badge">1</span>
        <div><b>27°C</b><span>Haze</span></div>
      </div>
      <div class="apps">
        <span class="cell"><svg class="win" width="35" height="35" viewBox="0 0 35 35"><defs><linearGradient id="win" x1="0" y1="0" x2="1" y2="1"><stop offset="0" stop-color="#4cc8fb" /><stop offset="1" stop-color="#0071ce" /></linearGradient></defs><path fill="url(#win)" d="M1 0h15.800v16.800H0V1zM18 0h16l1 1v15.800H18zM0 18h16.800v17H1l-1-1zM18 18h17v16l-1 1H18z" /></svg></span>
        <div class="search">
          <svg width="23" height="23" viewBox="0 0 23 23"><circle cx="9.500" cy="9.500" r="8" fill="none" stroke="#222" stroke-width="2.600" /><path d="M15.500 15.500l6 6" stroke="#222" stroke-width="3" /></svg>
          <span>Search</span>
          <svg class="school" width="67" height="38" viewBox="0 0 67 38">
            <path d="M0 31 20 23h28l19 8-6 5q-3 1-8 1H12q-4 0-7-2z" fill="#d9b183" />
            <path d="M7 16l24-5 2 14-22 6z" fill="#388e4a" /><path d="M7 13 18 12l12-4 2 15-11 3-10 3z" fill="#f5f3fa" stroke="#aaa" stroke-width=".6" /><path d="M19 12l3 14M10 17l6-1M11 21l6-1M22 15l6-1M22 19l6-1" stroke="#99a" stroke-width="1" />
            <path d="M25 18l2-5 6-8 3 3-7 8z" fill="#f5b13c" /><path d="M31 7l3-4 3 3-3 3z" fill="#f0624d" />
            <path d="M42 30V14q0-10 10-11 10 1 10 11v16q-10 3-20 0z" fill="#0a6fe8" /><path d="M48 5q4-8 8 0" fill="none" stroke="#0a5fd0" stroke-width="1.600" /><path d="M44 29v-8q8-8 16 0v8z" fill="#0648c0" /><path d="M44 27h16" stroke="#8b5cf0" stroke-width="2" /><path d="M45 14q7 4 14 0" stroke="#60b4ff" fill="none" />
          </svg>
        </div>
        <span class="cell"><svg width="35" height="35" viewBox="0 0 35 35">
          <defs><linearGradient id="cpa" x1=".6" y1="0" x2=".2" y2="1"><stop offset="0" stop-color="#1a6fe0" /><stop offset=".5" stop-color="#27a5c4" /><stop offset="1" stop-color="#d7c93c" /></linearGradient><linearGradient id="cpb" x1=".6" y1="0" x2=".3" y2="1"><stop offset="0" stop-color="#8a4fe8" /><stop offset=".6" stop-color="#d85fc0" /><stop offset="1" stop-color="#ff6b5e" /></linearGradient></defs>
          <path fill="url(#cpa)" d="M8 2h14q3 0 4 6h-6l-5 13q-1 2-3 2H4q-4 0-4-5L4 5q1-3 4-3z" /><path fill="url(#cpb)" d="M20 8h10q4 0 4 5l-3 9H15z" /><path d="M18 9l-4 13 4 0 4-13z" fill="#ece6ea" />
          <rect x="8" y="23" width="27" height="11" rx="2.500" fill="#ffc400" /><text x="11.500" y="32" class="pre">PRE</text></svg></span>
        <span class="cell"><svg width="36" height="35" viewBox="0 0 36 35"><rect y="10" width="27" height="25" rx="1.500" fill="#282725" /><rect x="9" y="1" width="27" height="24" rx="1" fill="#f4f4f4" opacity=".92" /><path d="M9 10h18v15H9z" fill="#b4b4b3" /></svg></span>
        <span class="cell"><svg width="36" height="36" viewBox="0 0 36 36"><defs><linearGradient id="st" x1="0" y1="0" x2=".4" y2="1"><stop offset="0" stop-color="#0a64b8" /><stop offset="1" stop-color="#26406f" /></linearGradient></defs><path d="M0 5h36v27q0 4-4 4H4q-4 0-4-4z" fill="url(#st)" /><path d="M9 8V2.500Q9 1 10.500 1h15q1.500 0 1.500 1.500V8" fill="none" stroke="#2cb9f2" stroke-width="2" /><path fill="#f25022" d="M10.500 13.500h7v7h-7z" /><path fill="#7fba00" d="M18.500 13.500h7v7h-7z" /><path fill="#00a4ef" d="M10.500 21.500h7v7h-7z" /><path fill="#ffb900" d="M18.500 21.500h7v7h-7z" /></svg></span>
        <span class="cell"><svg width="30" height="36" viewBox="0 0 30 36">
          <path fill="#fb3f12" d="M9 0h12l3 3.500 3-.5 3 4.500-1 3.500 1 3-4 14.500Q25 31 15 36 5 31 4 28.500L0 14l1-3-1-3.500L3 3l3 .5z" />
          <path fill="#fff" d="M6 8l5 1 4-1 4 1 5-1 2.500 5-4 6 .5 3-5 3.500L15 28l-3-2.500-5-3.500.5-3-4-6z" /><path fill="#fb3f12" d="M7 13l5 1-1 2.500zM23 13l-5 1 1 2.500zM14 11h2l1 8 3 2-5 3-5-3 3-2z" opacity=".9" /><path d="M11.500 25l3.500 3 3.500-3" fill="none" stroke="#fb3f12" stroke-width="1.200" /></svg></span>
        <span v-for="c in chromes" :key="c" class="cell" :class="{ current: c === 'bike' }">
          <svg class="cr" width="46" height="46" viewBox="0 0 46 46">
            <use href="#chrome" x="5" y="5" width="36" height="36" />
            <use v-if="c === 'bike'" href="#bike" x="25" y="-2" width="24" height="24" />
            <g v-else-if="c === 'portrait'"><circle cx="32" cy="14" r="9" fill="#4b3a35" /><path d="M29 22l1-9q3-3 5 0l2 8z" fill="#e9dfdc" /><circle cx="32.500" cy="9.500" r="2.500" fill="#c99e86" /></g>
            <g v-else><circle cx="32" cy="14" r="9" fill="#dfe6dc" /><path d="M23 13q2-8 9-8t9 8l-4-2-5 3-4-2z" fill="#6a7a42" /><path d="M27 12h9v5h-9z" fill="#8e8a76" /><path d="M31 13h2v4h-2z" fill="#222" /></g>
          </svg>
          <i v-if="c === 'bike'" />
        </span>
        <span class="cell"><svg width="36" height="36" viewBox="0 0 36 36"><path d="M0 11l4-3 23 19v9L1 14q-1-2-1-3z" fill="#0d7fcf" /><path d="M0 25l4 3L27 9V0L1 22q-1 2-1 3z" fill="#0a6ab5" /><path d="M26 0l1 1v34l-1 1 8-3.500q2-1 2-3V6.500q0-2-2-3z" fill="#2aa5f3" /><path d="M0 11l4-3 9 7.500L8 20 1 14q-1-2-1-3z" fill="#1484d4" /></svg></span>
      </div>
      <div class="tray">
        <svg class="chev" width="17" height="10" viewBox="0 0 17 10"><path d="M1 9l7.500-7.500L16 9" fill="none" stroke="#222" stroke-width="1.800" /></svg>
        <svg class="od" width="26" height="18" viewBox="0 0 26 18"><path d="M7 16.500a5.500 5.500 0 0 1-.5-10.700A7.200 7.200 0 0 1 19 5.500 5.500 5.500 0 0 1 20 16.500z" fill="#dcdcdc" /><path d="M6.500 5.800A7.200 7.200 0 0 1 19 5.500l2 .3-16 9q-5-6 1.500-9z" fill="#8a8a8a" /><path d="M7 16.500a5.500 5.500 0 0 1-.5-10.700A7.200 7.200 0 0 1 19 5.500 5.500 5.500 0 0 1 20 16.500z" fill="none" stroke="#1d1d1d" stroke-width="1.500" /></svg>
        <div class="lang"><span>ENG</span><span>IN</span></div>
        <svg class="wifi" width="24" height="18" viewBox="0 0 24 18"><g fill="none" stroke="#1d1d1d" stroke-width="1.600"><path d="M1 6.500a15.500 15.500 0 0 1 22 0" opacity=".25" /><path d="M4 9.500a11 11 0 0 1 16 0M7.200 12.500a7 7 0 0 1 9.600 0" /></g><circle cx="12" cy="15.500" r="2.200" fill="#1d1d1d" /></svg>
        <svg class="vol" width="25" height="20" viewBox="0 0 25 20"><g fill="none" stroke="#1d1d1d" stroke-width="1.500" stroke-linejoin="round"><path d="M1 7h4l6-5.500v17L5 13H1z" /><path d="M14 6.500q3 3.500 0 7M17 3.500q5.500 6.500 0 13M20 1q8 9 0 18" stroke-linecap="round" /></g></svg>
        <svg class="bat" width="24" height="20" viewBox="0 0 24 20"><rect x="1.200" y="5" width="19.500" height="13" rx="2.500" fill="none" stroke="#1d1d1d" stroke-width="1.700" /><path d="M3.500 15.800V12l4-4H13v7.800zM21.500 9h2.500v5h-2.500z" fill="#1d1d1d" /><path d="M4 0 .5 7H4l-1 4.500L8 4.500H5z" fill="#1d1d1d" stroke="#f3e2d5" stroke-width=".6" /></svg>
        <div class="clock"><span>21:06</span><span class="day8">29-11-2023</span></div>
        <svg class="bell" width="20" height="23" viewBox="0 0 20 23"><path fill="#003e92" d="M10 0a7.500 7.500 0 0 1 7.500 7.500v6l2.500 4.500H0l2.500-4.500v-6A7.500 7.500 0 0 1 10 0zM6 19.500h8q-1 3-4 3t-4-3z" /></svg>
      </div>
    </footer>
  </div>
</template>

<style>
body { margin: 0; overflow: hidden; }
</style>

<style scoped>
* { box-sizing: border-box; }
p, h1, h2, h3, h4 { margin: 0; font-weight: 400; }
svg { display: block; flex: none; }
.defs { position: absolute; }
.screen { width: 1920px; height: 1080px; display: flex; flex-direction: column; overflow: hidden; background: #fff; font-family: "Open Sans", "Noto Sans", sans-serif; white-space: nowrap; }

.tabstrip { height: 51px; flex: none; background: #000; display: flex; padding-left: 13px; }
.tab { position: relative; width: 358.600px; flex: none; display: flex; align-items: center; padding-left: 17.500px; color: #fff; }
.tab.ruled { background: linear-gradient(#4a4a4a, #4a4a4a) right 0 top 11px / 1.500px 30px no-repeat; }
.tab.active { background: #353535; border-radius: 10px 10px 0 0; }
.tab.active::before, .tab.active::after { content: ""; position: absolute; bottom: 0; width: 9px; height: 9px; }
.tab.active::before { left: -9px; background: radial-gradient(circle at 0 0, transparent 8.500px, #353535 9px); }
.tab.active::after { right: -9px; background: radial-gradient(circle at 100% 0, transparent 8.500px, #353535 9px); }
.fav { width: 35.200px; flex: none; }
.penfav { display: grid; place-items: center; width: 24px; height: 24px; border-radius: 4px; background: #fff; color: #111; }
.tabtitle { width: 256px; flex: none; overflow: hidden; font-size: 17px; letter-spacing: -.05px; }
.tabtitle.linkedin { letter-spacing: -.15px; }
.tabtitle.github { letter-spacing: -.12px; -webkit-mask: linear-gradient(90deg, #000 236px, transparent 258px); mask: linear-gradient(90deg, #000 236px, transparent 258px); }
.x { margin-left: 20px; }
.plus { margin: 16px 0 0 23px; }
.winctl { margin-left: auto; display: flex; gap: 52.700px; padding: 13.500px 27px 0 0; }
.winctl svg { fill: none; stroke: #fff; stroke-width: 1.200; }

.toolbar { height: 65px; flex: none; background: #353535; border-bottom: 2px solid #606060; display: flex; align-items: center; padding-left: 23px; }
.nav { fill: none; stroke: #8c8c8c; stroke-width: 2; margin-right: 28px; }
.nav.reload { stroke: #fff; stroke-width: 2.400; margin: 0 22px 0 -1px; }
.omnibox { width: 1548px; height: 51px; border-radius: 26px; background: #202124; display: flex; align-items: center; padding: 0 16px 0 21px; }
.url { margin-left: 18px; font-size: 20px; color: #909396; letter-spacing: .3px; }
.url b { font-weight: 400; color: #fff; letter-spacing: -.05px; }
.share { margin-left: auto; margin-right: 25px; fill: none; stroke: #b5b8bb; stroke-width: 1.800; }
.star { fill: none; stroke: #c9cbcd; stroke-width: 2; }
.omnibox + svg { margin-left: 21px; }
.panel { width: 22px; height: 21px; margin-left: 25px; border: 3px solid #fff; border-right-width: 9px; flex: none; }
.profile { margin-left: 21px; }
.dots { margin-left: 28px; }

.penhead { height: 98px; flex: none; background: #000; border-bottom: 1px solid #2c303a; display: flex; align-items: center; padding-left: 11px; font-family: Lato, sans-serif; }
.penlogo { color: #fff; margin-right: 11px; }
.pentitle { width: 1287px; padding-bottom: 1px; }
.pentitle p { font-size: 20px; line-height: 24px; color: #9b9fb4; letter-spacing: .53px; }
.pentitle h1 { font-size: 31px; line-height: 37px; font-weight: 700; color: #fff; letter-spacing: .3px; }
.btn { height: 65px; border: 0; padding: 0; border-radius: 5px; background: #444857; color: #fff; display: grid; place-items: center; font: 24px Lato, sans-serif; letter-spacing: .15px; }
.heart { width: 80px; margin-right: 15px; }
.source { width: 251px; margin-right: 15px; padding-bottom: 4px; }
.pin { width: 60px; border-radius: 5px 0 0 5px; margin-right: 2px; }
.caret { width: 38px; border-radius: 0 5px 5px 0; margin-right: 15px; }
.avatar { border-radius: 5px; margin-bottom: 2px; }

.viewport { height: 794px; flex: none; display: flex; overflow: hidden; }
.page { width: 1896px; height: 794px; overflow: hidden; font-family: "Liberation Sans", Arial, sans-serif; color: #000; }
.band { height: 30px; display: flex; width: 1895px; }
.band .g { width: 95px; background: #039833; }
.mid { flex: 1; background: #f1f1f1; }
.strip { display: block; width: 154px; height: 4px; background: #039833; border-radius: 0 0 6px 0; }
.now { height: 525px; display: flex; padding: 45px 0 0 20px; }
.report { width: 698px; }
em { font-style: normal; font-weight: 400; font-family: "DejaVu Serif", serif; font-size: .93em; line-height: 0; }
.date { font-size: 24px; line-height: 28px; color: #00f; padding-left: 1px; }
h2 { font-size: 48px; line-height: 54px; font-weight: 700; padding-left: 1px; }
.temp { height: 150px; display: flex; align-items: center; padding: 4px 0 0 34px; }
.temp span { font-size: 90px; line-height: 100px; margin-left: 34px; }
h3 { font-size: 29px; line-height: 32px; font-weight: 700; margin-top: 1px; }
.details { margin-top: 16px; border-left: 2px solid #f00; padding-left: 31px; height: 168px; font-size: 24px; line-height: 28px; color: #1d1d1d; }

.map { position: relative; width: 1157px; height: 450px; box-shadow: 0 1px 4px rgba(0, 0, 0, .5); }
.terrain { display: block; }
.terrain text { font-family: Roboto, "Noto Sans Telugu", "Noto Sans", sans-serif; fill: #fff; stroke: #1d1f23; stroke-width: 4px; stroke-linejoin: round; paint-order: stroke; }
.terrain .big { font-weight: 500; }
.terrain .te { font-weight: 700; }
.terrain .ta { font-family: "Noto Sans Tamil", "Lohit Tamil", sans-serif; stroke-width: 2.500px; }
.terrain .park { fill: #8fdc95; }
.terrain .ital { font-style: italic; }
.terrain .glogo { font-family: Lato, sans-serif; font-weight: 500; stroke-width: 1.500px; stroke: #555; }
.casing { stroke: #3b2e14; stroke-width: 3.600px; vector-effect: non-scaling-stroke; opacity: .75; }
.road { stroke: #efd592; stroke-width: 1.700px; vector-effect: non-scaling-stroke; }
.border { stroke: #e8e8e4; stroke-width: 1.200px; stroke-dasharray: 4 3; vector-effect: non-scaling-stroke; }
.card { position: absolute; left: 15px; top: 15px; width: 452px; height: 139px; background: #fff; border-radius: 3px; box-shadow: 0 1px 4px rgba(0, 0, 0, .3); display: flex; justify-content: space-between; padding: 15px 28px 0 18px; font-family: Roboto, sans-serif; font-size: 17.500px; }
.place { display: flex; flex-direction: column; }
.place b { font-size: 20px; line-height: 26px; font-weight: 500; letter-spacing: .55px; }
.place span { color: #5b5b5b; line-height: 22px; margin-top: 8px; letter-spacing: .25px; }
.card a { color: #1a73e8; }
.place a { line-height: 22px; margin-top: 31px; letter-spacing: .25px; }
.dir { display: flex; flex-direction: column; align-items: center; padding-top: 5px; }
.dir a { line-height: 22px; margin-top: 8px; letter-spacing: .2px; }
.thumb { position: absolute; left: 16px; top: 371px; }
.zoom { position: absolute; left: 1082px; top: 293px; width: 60px; height: 121px; background: #fff; border-radius: 3px; display: flex; flex-direction: column; align-items: center; padding-top: 16px; gap: 16px; box-shadow: 0 1px 4px rgba(0, 0, 0, .3); }
.zoom i { width: 45px; height: 1px; background: #e0e0e0; }
.credits { position: absolute; right: 0; bottom: 0; width: 675px; height: 21px; display: flex; gap: 1px; font: 14px/22px Roboto, sans-serif; color: #222; letter-spacing: .45px; }
.credits span { background: rgba(226, 228, 232, .78); text-align: center; }
.c1 { width: 147px; letter-spacing: .45px; }
.c2 { width: 324px; letter-spacing: .5px; }
.c3 { width: 59px; }
.c4 { flex: 1; }

.forecast { width: 1895px; height: 260px; border: solid #000; border-width: 0 1px; background: #00b300; padding: 0 25px; display: flex; }
.week { width: 1843px; height: 260px; border-top: 30px solid #737373; display: flex; }
.day { flex: 1; border: 1px solid #999; background: #cfc; display: flex; flex-direction: column; align-items: center; }
h4 { font-size: 36px; line-height: 40px; font-weight: 700; color: green; margin-top: 31px; }
.day svg { margin: 74px 0 0 1px; }
.scroll { width: 24px; background: #f1f1f1; display: flex; flex-direction: column; align-items: center; padding: 10px 0 6px; }
.scroll .up { border: 6px solid transparent; border-top: 0; border-bottom: 6px solid #505050; margin-left: -1px; }
.scroll .bar { width: 21px; height: 501px; background: #c1c1c1; margin-top: 103px; }
.scroll .down { border: 6px solid transparent; border-bottom: 0; border-top: 6px solid #505050; margin: auto 1px 0 0; }

.taskbar { height: 72px; border-top: 2px solid #b9afa6; display: flex; align-items: center; background: linear-gradient(90deg, #d9e6ca 0, #dfe5cd 50px, #e9dccc 75px, #eedad5 130px, #f0e0d3 250px, #f0e2d2 400px, #e9e0db 500px, #e2e1e6 570px, #e4dfe2 680px, #ecd9dc 790px, #f2e0d4 930px, #f2e0d4 1300px, #ece3d8 1440px, #dfe6ef 1500px, #dfe6ee 1540px, #f2e4dc 1580px, #f4e1d4 1650px, #f1e2cc 1800px, #f1e2ce 1920px); color: #1d1d1d; }
.weather { position: relative; width: 495px; height: 70px; display: flex; padding: 6px 0 0 28px; font-size: 16.500px; }
.weather div { display: flex; flex-direction: column; margin: 4px 0 0 6px; line-height: 24px; }
.weather b { font-weight: 400; letter-spacing: .2px; }
.weather div span { color: #5d5a57; letter-spacing: .4px; }
.badge { position: absolute; left: 54px; top: 8px; color: #fff; font-size: 16px; line-height: 22px; }
.apps { display: flex; align-items: center; height: 70px; padding-bottom: 2px; }
.cell { position: relative; width: 66px; height: 56px; display: grid; place-items: center; }
.cell.current::before { content: ""; position: absolute; inset: 0 5px; background: #faf1ec; border-radius: 5px; box-shadow: 0 1px 1px rgba(0, 0, 0, .12); }
.cell.current i { position: absolute; left: 21px; bottom: -1px; width: 24px; height: 5px; border-radius: 3px; background: #0078d4; }
.win { margin-right: 2px; }
.cr { position: relative; overflow: visible; }
.pre { font: 700 9.500px "Open Sans", sans-serif; letter-spacing: .4px; fill: #111; }
.search { width: 328px; height: 47px; margin: 0 4px 0 5px; border-radius: 24px; background: #faf6f5; border: 1px solid #cfc8c6; border-bottom: 2px solid #b9b3b1; display: flex; align-items: center; padding: 0 7px 0 16px; font-size: 19.500px; color: #5a5858; }
.search span { margin: 2px 0 0 15px; }
.school { margin-left: auto; }
.tray { flex: 1; height: 70px; display: flex; align-items: center; font-size: 16.500px; line-height: 23px; padding-bottom: 2px; }
.chev { margin-left: 56px; }
.od { margin-left: 27px; }
.lang { display: flex; flex-direction: column; align-items: center; width: 36px; margin-left: 26px; padding-top: 1px; }
.wifi { margin-left: 27px; }
.vol { margin-left: 11px; }
.bat { margin-left: 11px; }
.clock { display: flex; flex-direction: column; align-items: flex-end; width: 119px; line-height: 24px; font-size: 17px; }
.clock span:first-child { letter-spacing: .4px; }
.day8 { letter-spacing: .55px; margin-right: -.5px; }
.bell { margin-left: 13px; }
</style>
